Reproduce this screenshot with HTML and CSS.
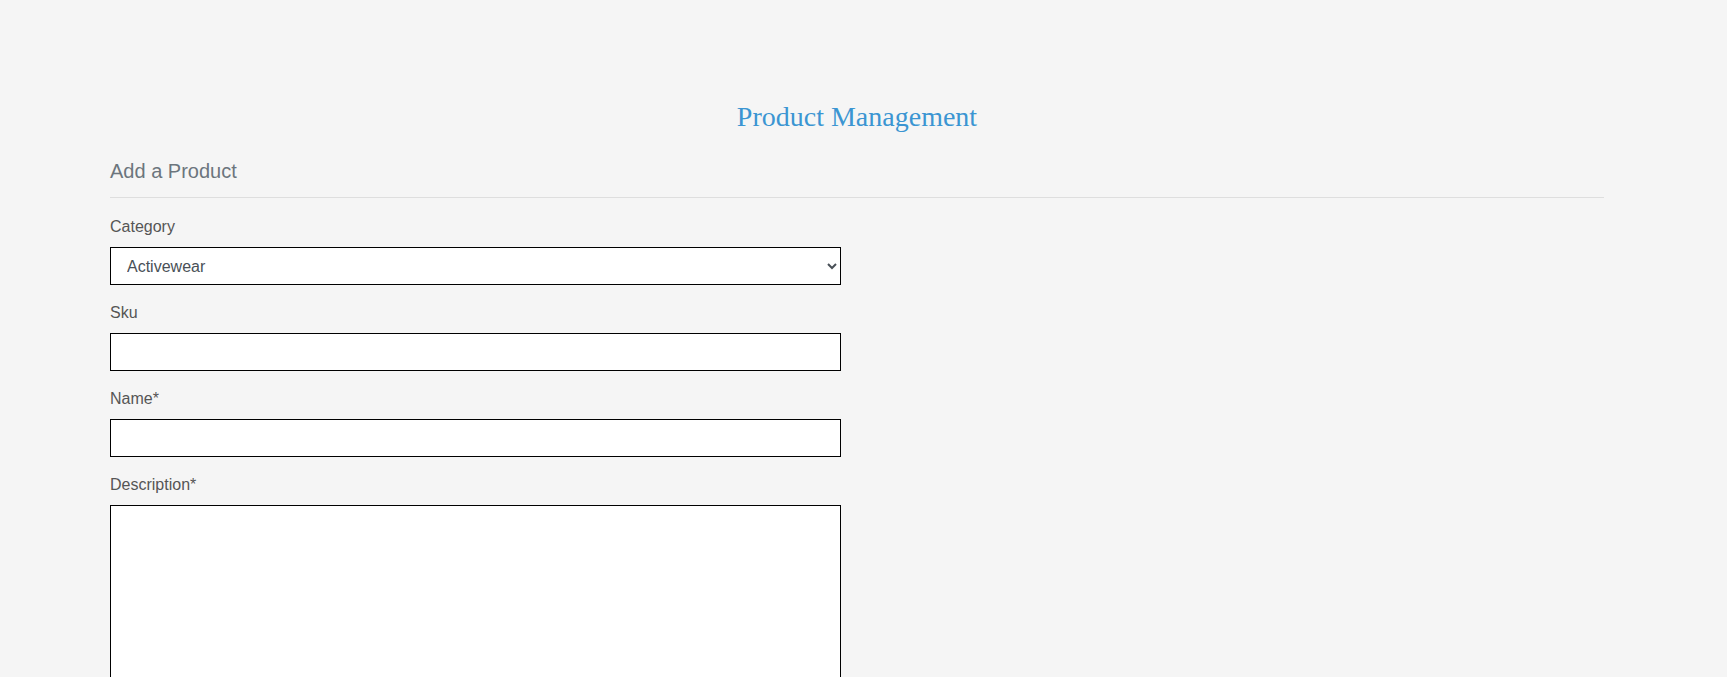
FILE: index.html
```html
<!DOCTYPE html>
<html lang="en">
<head>
<meta charset="utf-8">
<title>Product Management</title>
<link rel="stylesheet" href="styles.css">
</head>
<body>
<main class="page">
  <h1 class="page-title">Product Management</h1>
  <h2 class="section-title">Add a Product</h2>
  <hr class="divider">
  <form class="product-form">
    <div class="form-group">
      <label class="form-label" for="category">Category</label>
      <select class="form-control form-select" id="category">
        <option>Activewear</option>
        <option>Footwear</option>
        <option>Accessories</option>
      </select>
    </div>
    <div class="form-group">
      <label class="form-label" for="sku">Sku</label>
      <input class="form-control" id="sku" type="text">
    </div>
    <div class="form-group">
      <label class="form-label" for="name">Name*</label>
      <input class="form-control" id="name" type="text">
    </div>
    <div class="form-group">
      <label class="form-label" for="description">Description*</label>
      <textarea class="form-control form-textarea" id="description"></textarea>
    </div>
  </form>
</main>
</body>
</html>
```
FILE: styles.css
```css
html, body {
  margin: 0;
  padding: 0;
  background: #f5f5f5;
}

body {
  font-family: "Liberation Sans", Arial, sans-serif;
  color: #555;
}

.page {
  width: 1494px;
  margin-left: 110px;
  padding-top: 101px;
}

.page-title {
  margin: 0;
  font-family: "Liberation Serif", "Times New Roman", serif;
  font-weight: normal;
  font-size: 28px;
  line-height: 32px;
  color: #3b95d2;
  text-align: center;
}

.section-title {
  margin: 26px 0 0;
  font-weight: normal;
  font-size: 20px;
  line-height: 24px;
  color: #6c757d;
}

.divider {
  margin: 14px 0 0;
  border: 0;
  border-top: 1px solid #dedede;
  height: 0;
}

.product-form {
  width: 731px;
  padding-top: 17px;
}

.form-group {
  margin-bottom: 16px;
}

.form-label {
  display: block;
  font-size: 16px;
  line-height: 24px;
  margin-bottom: 8px;
  color: #555;
}

.form-control {
  display: block;
  box-sizing: border-box;
  width: 100%;
  height: 38px;
  margin: 0;
  border: 1px solid #000;
  border-radius: 0;
  background: #fff;
  font-family: "Liberation Sans", Arial, sans-serif;
  font-size: 16px;
  color: #495057;
  padding: 0 12px;
}

.form-select {
  padding-left: 12px;
}

.form-textarea {
  height: 220px;
  resize: vertical;
}
```
